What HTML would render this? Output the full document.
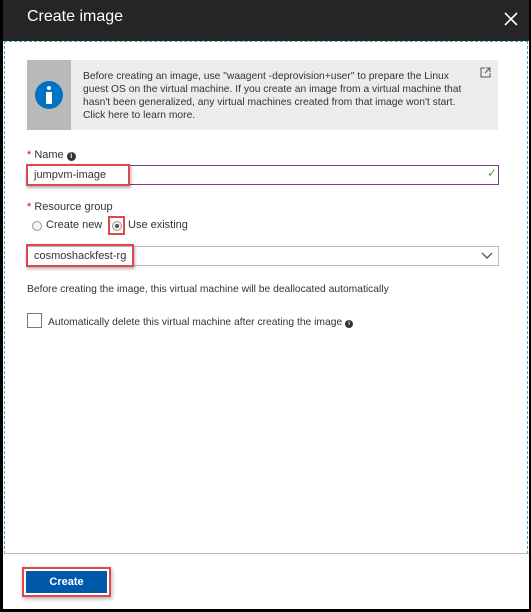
<!DOCTYPE html>
<html><head><style>
*{box-sizing:border-box;margin:0;padding:0}
body{width:531px;height:612px;background:#000;font-family:"Liberation Sans",sans-serif;position:relative;overflow:hidden;font-size:11px;color:#333}
.a{position:absolute}
</style></head><body>
<div class="a" style="left:3px;top:0;width:526px;height:609px;background:#fff"></div>
<div class="a" style="left:3px;top:0;width:526px;height:41px;background:#252525"></div>
<div class="a" style="left:27px;top:8px;color:#fff;font-size:16px">Create image</div>
<svg class="a" style="left:504px;top:12px" width="14" height="14"><path d="M1 1 L13 13 M13 1 L1 13" stroke="#fff" stroke-width="1.6"/></svg>
<div class="a" style="left:4px;top:41px;width:524px;height:513px;border:1px dashed #3fa9c9;border-bottom:none"></div>
<div class="a" style="left:4px;top:553px;width:525px;height:1px;background:#bbb"></div>
<div class="a" style="left:27px;top:60px;width:471px;height:70px;background:#ececec"></div>
<div class="a" style="left:27px;top:60px;width:44px;height:70px;background:#b9b9b9"></div>
<div class="a" style="left:35px;top:81px;width:28px;height:28px;border-radius:50%;background:#0072c6"></div>
<div class="a" style="left:47px;top:86px;width:4px;height:4px;background:#fff;border-radius:50%"></div>
<div class="a" style="left:46px;top:92px;width:6px;height:12px;background:#fff"></div>
<div class="a" style="left:83px;top:70px;white-space:nowrap;font-size:10.3px;line-height:13px;color:#333">Before creating an image, use "waagent -deprovision+user" to prepare the Linux<br>guest OS on the virtual machine. If you create an image from a virtual machine that<br>hasn't been generalized, any virtual machines created from that image won't start.<br>Click here to learn more.</div>
<svg class="a" style="left:480px;top:67px" width="11" height="11"><path d="M5 1 H1 V10 H10 V6 M6 1 H10 V5 M10 1 L5 6" stroke="#555" fill="none" stroke-width="1"/></svg>
<div class="a" style="left:27px;top:149px;font-size:11px"><span style="color:#d00">*</span> Name <span style="display:inline-block;width:9px;height:9px;border-radius:50%;background:#333;color:#fff;font-size:7px;text-align:center;line-height:9px;font-weight:bold">i</span></div>
<div class="a" style="left:27px;top:165px;width:472px;height:20px;border:1px solid #7a3f8a"></div>
<div class="a" style="left:26px;top:164px;width:104px;height:22px;border:2px solid #e0474c;box-shadow:1px 2px 3px rgba(0,0,0,.3)"></div>
<div class="a" style="left:34px;top:169px;font-size:11px">jumpvm-image</div>
<div class="a" style="left:487px;top:166px;color:#5ba12c;font-size:12px">✓</div>
<div class="a" style="left:27px;top:201px"><span style="color:#d00">*</span> Resource group</div>
<div class="a" style="left:32px;top:221px;width:10px;height:10px;border:1px solid #999;border-radius:50%;background:#f4f4f4"></div>
<div class="a" style="left:46px;top:219px;font-size:11px">Create new</div>
<div class="a" style="left:108px;top:216px;width:17px;height:19px;border:2px solid #e0474c"></div>
<div class="a" style="left:112px;top:221px;width:10px;height:10px;border:1px solid #999;border-radius:50%;background:#eee"></div>
<div class="a" style="left:115px;top:224px;width:4px;height:4px;border-radius:50%;background:#555"></div>
<div class="a" style="left:128px;top:219px;font-size:11px">Use existing</div>
<div class="a" style="left:27px;top:246px;width:472px;height:20px;border:1px solid #bbb"></div>
<div class="a" style="left:26px;top:244px;width:108px;height:23px;border:2px solid #e0474c;box-shadow:1px 2px 3px rgba(0,0,0,.3)"></div>
<div class="a" style="left:34px;top:250px;font-size:11px">cosmoshackfest-rg</div>
<svg class="a" style="left:481px;top:252px" width="12" height="8"><path d="M1 1 L6 6 L11 1" stroke="#444" fill="none" stroke-width="1.2"/></svg>
<div class="a" style="left:27px;top:284px;font-size:10.3px">Before creating the image, this virtual machine will be deallocated automatically</div>
<div class="a" style="left:27px;top:313px;width:15px;height:15px;border:1px solid #777"></div>
<div class="a" style="left:48px;top:317px;font-size:10.3px">Automatically delete this virtual machine after creating the image <span style="display:inline-block;width:8px;height:8px;border-radius:50%;background:#333;color:#fff;font-size:6px;text-align:center;line-height:8px;font-weight:bold">i</span></div>
<div class="a" style="left:22px;top:567px;width:89px;height:30px;border:2px solid #e0474c;box-shadow:1px 2px 4px rgba(0,0,0,.3)"></div>
<div class="a" style="left:26px;top:571px;width:81px;height:22px;background:#0058aa;color:#fff;font-size:11px;font-weight:bold;text-align:center;line-height:22px">Create</div>
</body></html>
